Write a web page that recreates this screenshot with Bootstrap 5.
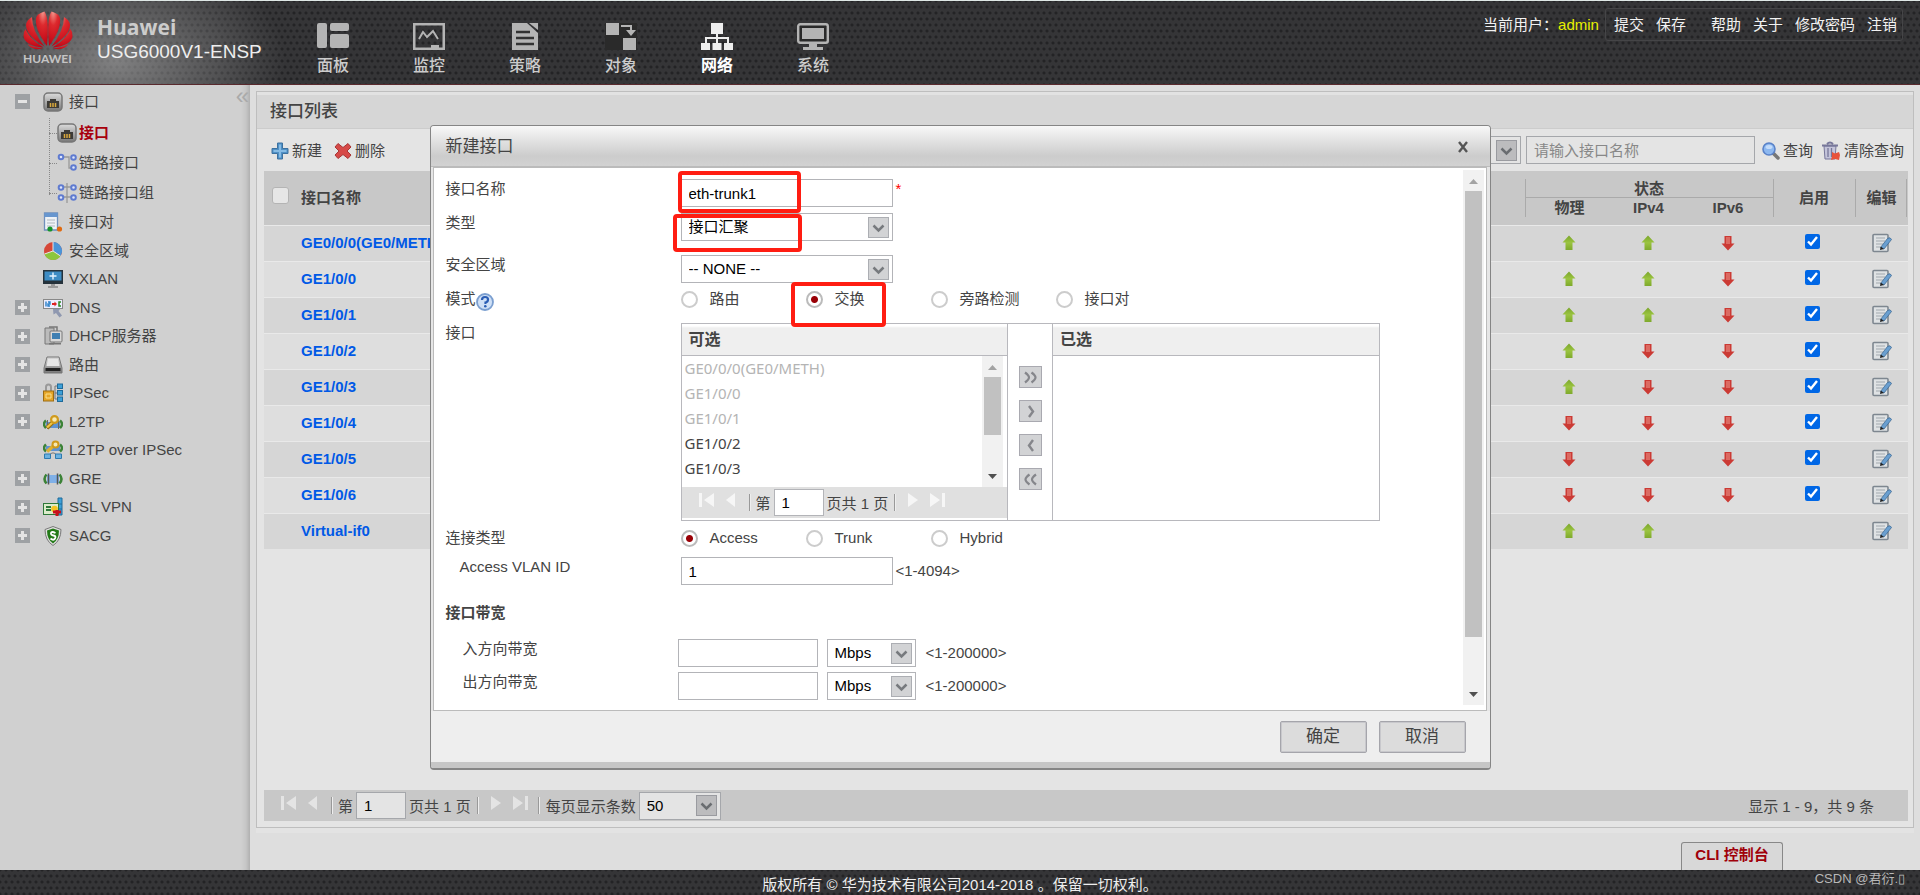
<!DOCTYPE html>
<html lang="zh-CN">
<head>
<meta charset="utf-8">
<meta name="viewport" content="width=device-width, initial-scale=1">
<title>USG6000V1-ENSP</title>
<link href="https://cdn.jsdelivr.net/npm/bootstrap@5.3.0/dist/css/bootstrap.min.css" rel="stylesheet">
<style>
body{font-family:"Liberation Sans","Noto Sans CJK SC",sans-serif;font-size:15px;line-height:20px;color:#444;background:#dedede}
a{color:inherit;text-decoration:none}
svg{display:block;flex:none}
button{color:inherit}
.i18{width:18px;height:18px}
.i20{width:20px;height:20px}
.mesh{background-color:#353537;background-image:radial-gradient(circle,#232325 0 1px,transparent 2px),radial-gradient(circle,#232325 0 1px,transparent 2px);background-size:6px 12px;background-position:0 0,3px 6px}
/* top bar */
.topbar{height:85px;border-top:1px solid #dfe8e6;border-bottom:1px solid #5a2a2e;position:relative}
.topbar::before{content:"";position:absolute;inset:0;background:radial-gradient(ellipse 170px 110px at 115px 60px,rgba(190,190,190,.55),transparent)}
.topbar>*{position:relative}
.logo{width:50px;margin-left:23px;padding-top:10px}
.logo-text{font:700 12px/14px Lato,"Liberation Sans",sans-serif;color:#c4c4c4;margin-top:2px}
.product{margin-left:24px;padding-top:14px;width:188px;white-space:nowrap}
.vendor{font:700 21px/24px "Open Sans","Noto Sans",sans-serif;color:#ccc}
.model{font-size:19px;line-height:26px;color:#eee}
.mainnav .nav-link{width:96px;padding:22px 0 0;color:#ccc;font-size:16px;line-height:22px;font-weight:500;display:flex;flex-direction:column;align-items:center}
.mainnav .nav-link svg{width:32px;height:28px;fill:#b4b4b4;margin-bottom:4px}
.mainnav .active{color:#fff;font-weight:700}
.mainnav .active svg{fill:#eee}
.user{color:#f2f2f2;margin:7px 17px 0 0;height:33px;white-space:nowrap}
.who{color:#e8f000;margin-right:6px}
.userbox{border:1px solid #454547;border-radius:3px;padding:0 5px 0 8px;height:33px;gap:12px}
.userbox .gapped{margin-left:13px}
/* side tree */
.side{width:250px;background:linear-gradient(90deg,#d0d0d0 0 241px,#c6c6c6 246px,#b0b0b0);position:relative}
.side ul{list-style:none;margin:0;padding:0}
.side .trunk{height:33px}
.side .twig{height:28px}
.side .twig:nth-child(odd){height:29px}
.side .node{display:flex;align-items:center;padding-left:15px}
.side .node>a{display:flex;align-items:center;gap:6px;margin-left:13px;white-space:nowrap}
.side .node.bare>a{margin-left:28px}
.tog{width:15px;height:15px;background:#9ea1a4;border:0;padding:0;position:relative;flex:none}
.tog::before,.tog.plus::after{content:"";position:absolute;left:3px;top:6px;width:9px;height:3px;background:#e4e4e4}
.tog.plus::after{transform:rotate(90deg)}
.branch{margin-left:49px!important;position:relative}
.branch::before{content:"";position:absolute;left:0;top:0;height:77px;border-left:1px dotted #888}
.branch li{height:30px;display:flex;align-items:center}
.branch li::before{content:"";width:8px;border-top:1px dotted #888}
.branch a{display:flex;align-items:center;gap:2px}
.branch .on{color:#a8000c;font-weight:700}
.fold{position:absolute;right:1px;top:1px;color:#aaa;border:0;background:none;padding:0;font-size:24px;line-height:20px}
/* list panel */
.listpanel{margin:6px 6px 0;border:1px solid #bebebe;background:#e4e4e4;box-shadow:0 5px 0 #e3e3e3;min-width:0}
.ptitle{font-size:17px;line-height:34px;height:37px;padding:3px 13px 0;margin:0;background:linear-gradient(#e2e2e2 3px,#d6d6d6 3px);border-bottom:1px solid #ccc}
.tools{height:42px;padding:0 9px 0 14px}
.tbtn{border:0;background:none;padding:2px 0 0;display:flex;align-items:center;gap:3px}
.box{height:28px;border:1px solid #b3b4b8;background:#fff;color:#000;padding:0 7px;border-radius:0;line-height:20px}
select.box{appearance:none;background:#fff url("data:image/svg+xml,%3Csvg xmlns='http://www.w3.org/2000/svg' width='21' height='21'%3E%3Crect x='.5' y='.5' width='20' height='20' fill='%23d2d3d5' stroke='%23acaeb3'/%3E%3Cpath d='M5.500 8.500l5 5 5-5' fill='none' stroke='%23777a7e' stroke-width='2.500'/%3E%3C/svg%3E") no-repeat right 3px center}
.dim .box{background-color:#e4e4e4;border-color:#a5a7ab;background-blend-mode:multiply}
.box::placeholder{color:#888}
.scope{width:200px}
.find{width:229px;margin:0 7px 0 5px}
.lists{padding:0 5px 6px 7px}
.grid{width:100%;margin:0;table-layout:fixed}
.grid th{background-color:#c8c8c8;background-repeat:no-repeat;height:27px;padding:0;text-align:center;line-height:18px}
.grid td{padding:0;height:36px;border-top:1px solid #e9e9e9;background:#dedede}
.grid tr:nth-child(odd) td{background:#d6d6d6}
.grid td svg{margin:auto}
.grid .nm{text-align:left;padding-left:1px;white-space:nowrap}
.grid .nm a{color:#0059e6;font-weight:700}
.sp{background-image:linear-gradient(#aaa,#aaa),linear-gradient(#aaa,#aaa);background-position:left center,left center;background-size:1px calc(100% - 16px)}
.sp.last{background-position:left center,right 1px center}
.st1{background-image:linear-gradient(#aaa,#aaa),linear-gradient(#aaa,#aaa);background-position:left bottom;background-size:1px 19px,100% 1px;vertical-align:bottom}
.st2{vertical-align:top;padding-top:1px!important}
.st2.lf{background-image:linear-gradient(#aaa,#aaa);background-size:1px 19px}
.allbox{appearance:none;width:17px;height:17px;background:#e6e6e6;border:1px solid #b4b4b4;border-radius:3px;vertical-align:middle;margin:0 4px 4px 0}
.ena{width:15px;height:15px;accent-color:#0067e6;margin:0 4px 5px 0;vertical-align:middle}
/* paging bar */
.pager{height:31px;padding-left:17px;background:#c8c8c8;white-space:nowrap}
.pager button{border:0;background:none;padding:0;margin-bottom:6px}
.pager svg{height:16px;fill:#e4e4e4}
.pager .box{width:50px;height:27px}
.pager select.box{width:82px;height:28px}
.bar{width:2px;height:17px;border-left:1px solid #999;border-right:1px solid #eee}
.gap12{margin-left:12px}
.b1{margin-left:13px}
.t1{margin:3px 3px 0 5px}
.t2{margin:3px 6px 0 3px}
.b3{margin-left:10px}
.t3{margin:3px 3px 0 6px}
.sum{padding-right:34px;margin-top:3px}
.climb{height:42px}
.cli{border:1px solid #888;border-bottom:0;border-radius:3px 3px 0 0;background:#d8d8d8;color:#a0000a;font-weight:700;width:102px;height:28px;margin-right:137px;padding:0 0 4px}
.foot{height:25px;color:#eee;position:relative;text-align:center;line-height:30px;overflow:hidden}
.credit{position:absolute;right:15px;top:0;font-size:13px;line-height:17px;color:#b8b8b8}
/* dialog */
.dlg{max-width:1061px;min-width:1061px}
.dlg .modal-content{border:1px solid #858585;border-bottom:2px solid #858585;border-radius:4px;background:#e6e6e6;overflow:hidden;color:#444}
.dtitle{height:41px;padding:1px 21px 0 15px;background:linear-gradient(#f8f8f8,#ccc 75%,#d2d2d2);font-size:17px;border-bottom:1px solid #bbb}
.dbody{margin:0 3px 0 2px;border:1px solid #bbb;background:#fff;height:544px;padding:11px 2px 0 12px}
.frow{display:flex;align-items:flex-start}
.frow>.cap{width:235px;flex:none}
.frow.bw>.cap{width:232px;padding-left:17px}
.h29{height:29px}.h33{height:33px}.h34{height:34px}.h36{height:36px}.h42{height:42px}.h46{height:46px}.h205{height:205px}
.full{width:212px}
.help{margin-top:4px}
.ind{padding-left:14px}
.hint{margin:4px 0 0 3px}
.bw .hint{margin-left:10px}
.rate{width:140px;margin-right:9px}
.unit{width:89px}
.rd{display:flex;align-items:center;width:125px;gap:12px;height:20px}
.rd input{appearance:none;width:17px;height:17px;border:2px solid #ccc;border-radius:50%;background:#fff;margin:0}
.rd input:checked{border-color:#bbb;background:radial-gradient(circle,#990006 0 3px,#fff 4px)}
.hl{position:absolute;border:4px solid #ff1d12;border-radius:4px;z-index:2;pointer-events:none}
.hl1{left:-3px;top:-8px;width:123px;height:42px}
.hl2{left:-8px;top:1px;width:129px;height:38px}
.hl3{left:110px;top:-7px;width:95px;height:45px}
.xfer{width:699px;height:198px;border:1px solid #b8b8bd}
.xcol{width:326px}
.xcol h2{font-size:16px;font-weight:700;line-height:26px;height:32px;margin:0;padding:3px 7px 0;background:linear-gradient(#fff 2px,#efefef 4px);border-bottom:1px solid #b8b8bd}
.xcol ul{list-style:none;margin:0;padding:0 0 0 3px;flex:1;font:15px/25px "Noto Sans",sans-serif}
.xcol .off{color:#b4b4b4}
.xlist{height:131px}
.xfer .pager{background:#e0e0e0}
.xfer .pager svg{fill:#f6f6f6}
.xmid{width:46px;border:solid #b8b8bd;border-width:0 1px;gap:12px;padding-top:42px}
.xmid button{width:23px;height:22px;border:1px solid #a9a9b0;background:#d2d3d5;padding:0;color:#85868b;display:grid;place-items:center}
.xmid svg{width:15px;height:13px}
.sbar{width:21px;background:#f1f1f1;display:flex;flex-direction:column;align-items:center}
.sbar i{width:17px;background:#c1c1c1;margin-bottom:auto}
.sbar svg{width:9px;height:21px}
.mainbar{margin:-9px 0 5px}
.thumb-lg{height:446px}
.thumb-sm{height:58px}
.dfoot{height:51px;gap:12px;padding:0 24px 0 0;background:#eee}
.dfoot button{width:87px;height:32px;border:1px solid #a5a5ab;border-radius:2px;background:#dcdcdc;box-shadow:inset 0 0 0 1px #c8c8cc;font-size:17px;padding:0}
.dedge{height:6px;background:#c6c6c6}
.star{color:#f00;margin-left:3px}
</style>
</head>
<body class="d-flex flex-column min-vh-100">
<svg width="0" height="0" class="position-absolute" aria-hidden="true">
<defs>
<linearGradient id="gg" x2="0" y2="1"><stop stop-color="#7aa52c"/><stop offset=".5" stop-color="#9bc440"/><stop offset="1" stop-color="#7ea92c"/></linearGradient>
<linearGradient id="gs" x2="0" y2="1"><stop stop-color="#dcdcdc"/><stop offset="1" stop-color="#777"/></linearGradient>
<radialGradient id="gp" cx=".58" cy="0" r="1"><stop stop-color="#f49b90"/><stop offset=".4" stop-color="#dd2a2e"/><stop offset="1" stop-color="#c00414"/></radialGradient>
</defs>
<symbol id="up" viewBox="0 0 14 16"><path d="M7 .5l6.500 7h-3V15h-7V7.500h-3z" fill="url(#gg)"/></symbol>
<symbol id="dn" viewBox="0 0 14 16"><path d="M3.500 1h7v7.500h3L7 15.500.5 8.500h3z" fill="#cb3a34"/><path d="M5 2h4v7H5z" fill="#dc6a62"/></symbol>
<symbol id="ed" viewBox="0 0 20 20"><rect x="1" y="1.500" width="15" height="17" rx="1" fill="#dfe2e4" stroke="#7e8790" stroke-width="1.600"/><path d="M4 5h9M4 8h9M4 11h7M4 14h4" stroke="#a2a8ae" stroke-width="1.200"/><path d="M8.500 14.500l7-9q3-2 4 1l-7.500 9.500z" fill="#6a9fd0" stroke="#3f6b94" stroke-width=".8"/><path d="M8 17l.7-3.500 3.300 2.500z" fill="#222"/></symbol>
<symbol id="port" viewBox="0 0 20 20"><rect x="1" y="1" width="18" height="18" rx="4" fill="url(#gs)" stroke="#777" stroke-width="1.500"/><path d="M4 16V9h3V7h6v2h3v7z" fill="#3c3a36"/><path d="M7.500 11v4M10 11v4M12.500 11v4" stroke="#d9a83c" stroke-width="1.500"/></symbol>
<symbol id="link" viewBox="0 0 20 20"><path d="M6 4h6v11h3M6 4h3" fill="none" stroke="#999" stroke-width="1.300"/><g fill="#dfe6fb" stroke="#5f7bd0" stroke-width="2"><circle cx="4" cy="4" r="2.300"/><circle cx="16.500" cy="4.500" r="2.300"/><circle cx="16.500" cy="14.500" r="2.300"/></g></symbol>
<symbol id="grp" viewBox="0 0 20 20"><path d="M10 0v20M5 4h10M5 14h10" fill="none" stroke="#999" stroke-width="1.300"/><g fill="#dfe6fb" stroke="#5f7bd0" stroke-width="2"><circle cx="4" cy="4.500" r="2.300"/><circle cx="16.500" cy="4.500" r="2.300"/><circle cx="4" cy="14.500" r="2.300"/><circle cx="16.500" cy="14.500" r="2.300"/></g></symbol>
<symbol id="pair" viewBox="0 0 20 20"><path d="M1.500 1h13v17h-13z" fill="#eef2f6" stroke="#6f8fbb" stroke-width="1.300"/><path d="M1.500 1h13v4h-13z" fill="#6796cf"/><path d="M4 8h8M4 11h8M4 14h8" stroke="#b0b8c0"/><circle cx="7" cy="17" r="2.600" fill="#16942b"/><circle cx="16.500" cy="17" r="2.600" fill="#e06a10"/></symbol>
<symbol id="pie" viewBox="0 0 20 20"><circle cx="10" cy="10" r="9" fill="#d64738"/><path d="M10 10V1a9 9 0 0 1 7.500 14z" fill="#4b94d8"/><path d="M10 10l7.500 5a9 9 0 0 1-16-2z" fill="#8cc63e"/><path d="M10 1v9l7.500 5M10 10l-8.500 3" fill="none" stroke="#e8e8e8"/></symbol>
<symbol id="mon" viewBox="0 0 20 20"><rect y="1" width="20" height="14" fill="#25323b"/><path d="M1.500 2.500h17v9h-17z" fill="#3d8cc4"/><path d="M10 3.500v7M6.500 7h7" stroke="#e6f4ff" stroke-width="1.400"/><path d="M8 15h4v2h3v2H5v-2h3z" fill="#999"/></symbol>
<symbol id="dns" viewBox="0 0 20 20"><rect x=".5" y="1.500" width="19" height="9" fill="#eef" stroke="#888"/><path d="M3 3.500v5M5 4h2v2H5v2h2" stroke="#2a80c8" fill="none" stroke-width="1.400"/><path d="M9 6h4" stroke="#d22" stroke-width="2"/><path d="M11.500 3.500L14 6l-2.500 2.500z" fill="#d22"/><path d="M18 4h-2v4h2" fill="none" stroke="#2a8a20" stroke-width="1.500"/><path d="M10 11h7l-1.500 2 3.500 4.500-2.500 2-3.500-4.500-2.500 1.500z" fill="#8f98b0"/></symbol>
<symbol id="srv" viewBox="0 0 20 20"><path d="M2 2h9v16H2z" fill="#bbb" stroke="#777"/><path d="M6 1h8v6" fill="none" stroke="#777" stroke-width="1.500"/><rect x="7" y="5" width="12" height="11" rx="1" fill="#d8d8d8" stroke="#777"/><path d="M9 7h8v6H9z" fill="#3f7fb2"/><path d="M6 17h12v1.500H6z" fill="#777"/></symbol>
<symbol id="rt" viewBox="0 0 20 20"><path d="M4 2h12l3 11v5H1v-5z" fill="url(#gs)" stroke="#777"/><path d="M5 4h10l1.500 7h-13z" fill="#e6e6e6"/><path d="M2.500 13h15v3h-15z" fill="#222"/></symbol>
<symbol id="lock" viewBox="0 0 20 20"><path d="M3 9V4q0-2.500 2.500-2.500T8 4v5" fill="none" stroke="#999" stroke-width="2"/><rect x=".5" y="8" width="10" height="10" fill="#e6a628" stroke="#9c6c12"/><path d="M3 11h5v4H3z" fill="none" stroke="#fbe08a"/><g fill="#3da0d8" stroke="#1f6a9a"><rect x="14.500" y="1" width="5" height="4.500"/><rect x="14.500" y="7.500" width="5" height="4.500"/><rect x="14.500" y="14" width="5" height="4.500"/></g><path d="M14 3h-2v13h2M12 10h2" fill="none" stroke="#777"/></symbol>
<symbol id="l2" viewBox="0 0 20 20"><path d="M3 10h14v6H3z" fill="#5f93d2"/><path d="M3 8.500Q-1 12 3 16M17 8.500q4 3.500 0 7.500" fill="none" stroke="#3b8236" stroke-width="2.500"/><path d="M4.500 8v9M15.500 8v9" stroke="#666"/><path d="M4 16l6-6" stroke="#9c7310" stroke-width="4"/><path d="M4 15.500l6-5.500" stroke="#f0c648" stroke-width="2.200"/><circle cx="11.500" cy="7.500" r="3.400" fill="#f6e9b4" stroke="#d09a1c" stroke-width="2.200"/></symbol>
<symbol id="l2o" viewBox="0 0 20 20"><path d="M3 6h14v5H3z" fill="#5f93d2"/><path d="M3 4.500q-4 3.500 0 7M17 4.500q4 3.500 0 7" fill="none" stroke="#3b8236" stroke-width="2.500"/><path d="M4 11.500l7-6" stroke="#e0b030" stroke-width="3.500"/><circle cx="12.500" cy="4.500" r="3" fill="#f6e9b4" stroke="#d09a1c" stroke-width="2"/><path d="M4 16l5-3h2l5 3" stroke="#777" fill="none"/><path d="M1.500 14h6v4.500h-6zM12.500 14h6v4.500h-6z" fill="#6cb2e0" stroke="#2d7ab0"/></symbol>
<symbol id="gre" viewBox="0 0 20 20"><path d="M4 6h12v8H4z" fill="#7fb0e8"/><path d="M3.500 5.500q-4 4.500 0 9M16.500 5.500q4 4.500 0 9" fill="none" stroke="#3b8236" stroke-width="2.500"/><path d="M5.500 4.500v11M14.500 4.500v11" stroke="#555" stroke-width="1.500"/></symbol>
<symbol id="ssl" viewBox="0 0 20 20"><path d="M15 1h4v17h-4z" fill="#3da0d8" stroke="#1f6a9a"/><path d="M15 7h4M15 12h4" stroke="#1f6a9a"/><rect x=".5" y="6.500" width="15" height="11" fill="#dceccb" stroke="#2f7a3a"/><path d="M3 10h5M3 13h5" stroke="#2f7a3a" stroke-width="2"/><circle cx="11.500" cy="12" r="3.300" fill="#f5c420"/><path d="M10 15h8M14 13v6" stroke="#c8101c" stroke-width="3"/></symbol>
<symbol id="shd" viewBox="0 0 20 20"><path d="M10 .5l8 3q0 11-8 16Q2 14.500 2 3.500z" fill="#e0e0e0" stroke="#777"/><path d="M10 2.500l6 2q0 9-6 13-6-4-6-13z" fill="#237a18"/><path d="M12.500 7q-4-2-4.500 0t2.500 2.500 1.500 3-4.500 0" fill="none" stroke="#fff" stroke-width="1.800"/></symbol>
<symbol id="arrU" viewBox="0 0 9 21"><path d="M0 14l4.500-5L9 14z"/></symbol>
<symbol id="arrD" viewBox="0 0 9 21"><path d="M0 8h9l-4.500 5z"/></symbol>
<symbol id="pf" viewBox="0 0 15 16"><path d="M0 1h3v14H0zM15 1v14L5 8z"/></symbol>
<symbol id="pp" viewBox="0 0 10 16"><path d="M9 1v14L0 8z"/></symbol>
<symbol id="pn" viewBox="0 0 10 16"><path d="M0 1l10 7-10 7z"/></symbol>
<symbol id="pl" viewBox="0 0 15 16"><path d="M0 1l10 7-10 7zM12 1h3v14h-3z"/></symbol>
</svg>

<header class="topbar mesh d-flex align-items-start">
  <div class="logo">
    <svg width="50" height="39" viewBox="0 0 50 39" fill="url(#gp)"><g id="wing"><path d="M24 35C16 24 12 15 13 7q1-4.500 8.500-6.500C25 6 25.500 16 24 35z"/><path d="M21.500 35.500C9 28 3 21 3 14q.5-5 6-8 0 14 12.500 29.500z"/><path d="M20.500 36.500C8 35.500 1 31 .5 25q-.3-4 2-7 4 10 18 18.500z"/><path d="M20 37.500q-11 2.500-15.500-4.500 6 3 15.500 4.500z"/></g><use href="#wing" transform="matrix(-1 0 0 1 50 0)"/></svg>
    <div class="logo-text">HUAWEI</div>
  </div>
  <div class="product"><div class="vendor">Huawei</div><div class="model">USG6000V1-ENSP</div></div>
  <nav class="nav mainnav flex-nowrap">
    <a class="nav-link" href="#"><svg viewBox="0 0 32 28"><rect width="10" height="25" rx="2"/><rect x="13" width="19" height="8" rx="2"/><rect x="13" y="11" width="19" height="14" rx="2"/></svg>面板</a>
    <a class="nav-link" href="#"><svg viewBox="0 0 32 28"><path fill-rule="evenodd" d="M0 0h32v27H0zM2.500 2.500v22H18V22h8v2.500h3.500v-22z"/><path d="M6 16l4-7 4 5 6-6 5 8" fill="none" stroke="#b4b4b4" stroke-width="2"/></svg>监控</a>
    <a class="nav-link" href="#"><svg viewBox="0 0 32 28"><path d="M3 0h15l11 10v17H3z"/><path d="M20 0h9v7z"/><path d="M7 9h14M7 15h18M7 21h18" stroke="#333" stroke-width="2.500"/></svg>策略</a>
    <a class="nav-link" href="#"><svg viewBox="0 0 32 28"><path d="M0 0h32v27H0z" fill="#2a2a2a"/><path d="M1 0h13v12H1zM18 15h13v12H18zM16 2h11v5h4l-5 6-5-6h4V4h-9z"/></svg>对象</a>
    <a class="nav-link active" href="#"><svg viewBox="0 0 32 28"><path d="M10 0h12v11H10zM0 20h9v7H0zM11.500 20h9v7h-9zM23 20h9v7h-9z"/><path d="M16 10v10M5 21v-6h22v6" fill="none" stroke="#eee" stroke-width="2"/></svg>网络</a>
    <a class="nav-link" href="#"><svg viewBox="0 0 32 28"><rect x="1.200" y="1.200" width="29.600" height="18.600" rx="2" fill="#2a2a2a" stroke="#b4b4b4" stroke-width="2.400"/><path d="M5 5h22v11H5zM12 20h8v4h6v3H6v-3h6z"/></svg>系统</a>
  </nav>
  <div class="user ms-auto d-flex align-items-center">当前用户：<span class="who">admin</span>
    <div class="userbox d-flex align-items-center"><a href="#">提交</a><a href="#">保存</a><a href="#" class="gapped">帮助</a><a href="#">关于</a><a href="#">修改密码</a><a href="#">注销</a></div>
  </div>
</header>

<div class="d-flex flex-grow-1">
  <aside class="side flex-shrink-0">
    <button class="fold" aria-label="收起">«</button>
    <ul>
      <li><div class="node trunk"><button class="tog" aria-label="折叠"></button><a href="#"><svg class="i20"><use href="#port"/></svg>接口</a></div>
        <ul class="branch">
          <li><a href="#" class="on"><svg class="i20"><use href="#port"/></svg>接口</a></li>
          <li><a href="#"><svg class="i20"><use href="#link"/></svg>链路接口</a></li>
          <li><a href="#"><svg class="i20"><use href="#grp"/></svg>链路接口组</a></li>
        </ul></li>
      <li class="node bare twig"><a href="#"><svg class="i20"><use href="#pair"/></svg>接口对</a></li>
      <li class="node bare twig"><a href="#"><svg class="i20"><use href="#pie"/></svg>安全区域</a></li>
      <li class="node bare twig"><a href="#"><svg class="i20"><use href="#mon"/></svg>VXLAN</a></li>
      <li class="node twig"><button class="tog plus" aria-label="展开"></button><a href="#"><svg class="i20"><use href="#dns"/></svg>DNS</a></li>
      <li class="node twig"><button class="tog plus" aria-label="展开"></button><a href="#"><svg class="i20"><use href="#srv"/></svg>DHCP服务器</a></li>
      <li class="node twig"><button class="tog plus" aria-label="展开"></button><a href="#"><svg class="i20"><use href="#rt"/></svg>路由</a></li>
      <li class="node twig"><button class="tog plus" aria-label="展开"></button><a href="#"><svg class="i20"><use href="#lock"/></svg>IPSec</a></li>
      <li class="node twig"><button class="tog plus" aria-label="展开"></button><a href="#"><svg class="i20"><use href="#l2"/></svg>L2TP</a></li>
      <li class="node bare twig"><a href="#"><svg class="i20"><use href="#l2o"/></svg>L2TP over IPSec</a></li>
      <li class="node twig"><button class="tog plus" aria-label="展开"></button><a href="#"><svg class="i20"><use href="#gre"/></svg>GRE</a></li>
      <li class="node twig"><button class="tog plus" aria-label="展开"></button><a href="#"><svg class="i20"><use href="#ssl"/></svg>SSL VPN</a></li>
      <li class="node twig"><button class="tog plus" aria-label="展开"></button><a href="#"><svg class="i20"><use href="#shd"/></svg>SACG</a></li>
    </ul>
  </aside>

  <main class="flex-grow-1 d-flex flex-column dim">
    <section class="listpanel flex-grow-1 d-flex flex-column">
      <h1 class="ptitle">接口列表</h1>
      <div class="tools d-flex align-items-center">
        <button class="tbtn"><svg class="i18" viewBox="0 0 18 18"><path d="M6.500 1h5v5.500H17v5h-5.500V17h-5v-5.500H1v-5h5.500z" fill="#4f90c6" stroke="#3c719f"/><path d="M9 2.500v13M2.500 9h13" stroke="#86bbe4" stroke-width="2"/></svg>新建</button>
        <button class="tbtn ms-2 ps-1"><svg class="i18" viewBox="0 0 18 18"><path d="M4 1.500l5 4 5-4L17 5l-4 4 4 4-3 3.500-5-4-5 4L1 13l4-4-4-4z" fill="#d64a48" stroke="#a83535"/></svg>删除</button>
        <select class="box scope ms-auto" aria-label="查询条件"><option></option></select>
        <input class="box find" placeholder="请输入接口名称" aria-label="接口名称">
        <button class="tbtn"><svg class="i18" viewBox="0 0 18 18"><path d="M11 11l5 5" stroke="#777" stroke-width="3.500" stroke-linecap="round"/><circle cx="7" cy="7" r="6" fill="#8db8f0" stroke="#5a82c8" stroke-width="1.600"/><ellipse cx="7" cy="5" rx="3.500" ry="2" fill="#c4dcfa"/></svg>查询</button>
        <button class="tbtn ms-2"><svg class="i20" viewBox="0 0 20 20"><path d="M3 5h12l-1 13H4z" fill="#c4c4da" stroke="#77779a"/><path d="M7 7v9M10.500 7v9" stroke="#77779a" stroke-width="1.300"/><path d="M1 4.500h16M6 3q3-3 6 0" fill="none" stroke="#77779a" stroke-width="2"/><path d="M11 11l3 1.500 4-1.500 1 3-1 5-4-1-4 1 1-4z" fill="#e8523a"/></svg>清除查询</button>
      </div>
      <div class="lists flex-grow-1 d-flex flex-column justify-content-between">
        <table class="grid">
          <colgroup><col style="width:36px"><col><col style="width:89px"><col style="width:69px"><col style="width:90px"><col style="width:82px"><col style="width:53px"></colgroup>
          <thead>
            <tr><th rowspan="2"><input type="checkbox" class="allbox" aria-label="全选"></th><th rowspan="2" class="nm">接口名称</th><th colspan="3" class="st1">状态</th><th rowspan="2" class="sp">启用</th><th rowspan="2" class="sp last">编辑</th></tr>
            <tr><th class="st2 lf">物理</th><th class="st2">IPv4</th><th class="st2">IPv6</th></tr>
          </thead>
          <tbody id="rows"></tbody>
        </table>
        <div class="pager d-flex align-items-center">
          <button aria-label="首页"><svg width="15"><use href="#pf"/></svg></button>
          <button aria-label="上一页" class="gap12"><svg width="10"><use href="#pp"/></svg></button>
          <span class="bar b1"></span><span class="t1">第</span><input class="box" value="1" aria-label="页码"><span class="t2">页共 1 页</span>
          <span class="bar"></span>
          <button aria-label="下一页" class="gap12"><svg width="10"><use href="#pn"/></svg></button>
          <button aria-label="末页" class="gap12"><svg width="15"><use href="#pl"/></svg></button>
          <span class="bar b3"></span><label for="psize" class="t3">每页显示条数</label>
          <select id="psize" class="box"><option>50</option></select>
          <span class="ms-auto sum">显示 1 - 9，共 9 条</span>
        </div>
      </div>
    </section>
    <div class="d-flex justify-content-end align-items-end climb"><button class="cli">CLI 控制台</button></div>
  </main>
</div>
<footer class="foot mesh">版权所有 © 华为技术有限公司2014-2018 。保留一切权利。<span class="credit">CSDN @君衍.▯</span></footer>

<div class="modal d-block overflow-hidden" role="dialog" aria-label="新建接口">
  <div class="modal-dialog modal-dialog-centered dlg my-0 min-vh-100">
    <div class="modal-content">
      <div class="dtitle d-flex align-items-center justify-content-between">新建接口
        <button class="border-0 bg-transparent p-0" aria-label="关闭"><svg width="12" height="12" viewBox="0 0 12 12"><path d="M2 1l8 10M10 1L2 11" stroke="#555" stroke-width="2.400"/></svg></button></div>
      <div class="dbody d-flex">
        <form class="flex-grow-1">
          <div class="frow h34"><label class="cap" for="nm">接口名称</label><div class="position-relative d-flex"><input id="nm" class="box full" value="eth-trunk1"><span class="star">*</span><span class="hl hl1"></span></div></div>
          <div class="frow h42"><label class="cap" for="tp">类型</label><div class="position-relative"><select id="tp" class="box full"><option>接口汇聚</option></select><span class="hl hl2"></span></div></div>
          <div class="frow h34"><label class="cap" for="zn">安全区域</label><select id="zn" class="box full"><option>-- NONE --</option></select></div>
          <div class="frow h34"><div class="cap d-flex">模式<svg class="i18 help" viewBox="0 0 18 18"><circle cx="9" cy="9" r="8" fill="#cfe0f6" stroke="#7b9fd0" stroke-width="1.800"/><path d="M6 7q0-3 3-3t3 2.500-2.500 3v1.500" fill="none" stroke="#2a5db4" stroke-width="2.200"/><circle cx="9.300" cy="13.300" r="1.300" fill="#2a5db4"/></svg></div>
            <div class="position-relative d-flex"><label class="rd"><input type="radio" name="mode">路由</label><label class="rd"><input type="radio" name="mode" checked>交换</label><label class="rd"><input type="radio" name="mode">旁路检测</label><label class="rd"><input type="radio" name="mode">接口对</label><span class="hl hl3"></span></div></div>
          <div class="frow h205"><div class="cap">接口</div>
            <div class="xfer d-flex">
              <div class="xcol"><h2>可选</h2>
                <div class="xlist d-flex"><ul><li class="off">GE0/0/0(GE0/METH)</li><li class="off">GE1/0/0</li><li class="off">GE1/0/1</li><li>GE1/0/2</li><li>GE1/0/3</li></ul>
                  <div class="sbar me-1"><svg fill="#a3a3a3"><use href="#arrU"/></svg><i class="thumb-sm"></i><svg fill="#505050"><use href="#arrD"/></svg></div></div>
                <div class="pager d-flex align-items-center">
                  <button type="button" aria-label="首页"><svg width="15"><use href="#pf"/></svg></button>
                  <button type="button" aria-label="上一页" class="gap12"><svg width="10"><use href="#pp"/></svg></button>
                  <span class="bar b1"></span><span class="t1">第</span><input class="box" value="1" aria-label="页码"><span class="t2">页共 1 页</span>
                  <span class="bar"></span>
                  <button type="button" aria-label="下一页" class="gap12"><svg width="10"><use href="#pn"/></svg></button>
                  <button type="button" aria-label="末页" class="gap12"><svg width="15"><use href="#pl"/></svg></button>
                </div></div>
              <div class="xmid d-flex flex-column align-items-center">
                <button type="button" aria-label="全部添加"><svg viewBox="0 0 15 13" fill="none" stroke="currentColor" stroke-width="2.200"><path d="M2 1.500q4 3 4 5t-4 5M8.500 1.500q4 3 4 5t-4 5"/></svg></button>
                <button type="button" aria-label="添加"><svg viewBox="0 0 15 13" fill="none" stroke="currentColor" stroke-width="2.400"><path d="M6 1l4 5.500L6 12"/></svg></button>
                <button type="button" aria-label="移除"><svg viewBox="0 0 15 13" fill="none" stroke="currentColor" stroke-width="2.400"><path d="M10 1L6 6.500 10 12"/></svg></button>
                <button type="button" aria-label="全部移除"><svg viewBox="0 0 15 13" fill="none" stroke="currentColor" stroke-width="2.200"><path d="M6.500 1.500q-4 3-4 5t4 5M13 1.500q-4 3-4 5t4 5"/></svg></button>
              </div>
              <div class="xcol flex-fill"><h2>已选</h2></div>
            </div></div>
          <div class="frow h29"><div class="cap">连接类型</div><label class="rd"><input type="radio" name="lt" checked>Access</label><label class="rd"><input type="radio" name="lt">Trunk</label><label class="rd"><input type="radio" name="lt">Hybrid</label></div>
          <div class="frow h46"><label class="cap ind" for="vl">Access VLAN ID</label><input id="vl" class="box full" value="1"><span class="hint">&lt;1-4094&gt;</span></div>
          <div class="frow h36"><b>接口带宽</b></div>
          <div class="frow bw h33"><label class="cap" for="bi">入方向带宽</label><input id="bi" class="box rate"><select class="box unit" aria-label="单位"><option>Mbps</option></select><span class="hint">&lt;1-200000&gt;</span></div>
          <div class="frow bw h33"><label class="cap" for="bo">出方向带宽</label><input id="bo" class="box rate"><select class="box unit" aria-label="单位"><option>Mbps</option></select><span class="hint">&lt;1-200000&gt;</span></div>
        </form>
        <div class="sbar mainbar"><svg fill="#a3a3a3"><use href="#arrU"/></svg><i class="thumb-lg"></i><svg fill="#505050"><use href="#arrD"/></svg></div>
      </div>
      <div class="dfoot d-flex align-items-center justify-content-end"><button>确定</button><button>取消</button></div>
      <div class="dedge"></div>
    </div>
  </div>
</div>
<script src="https://cdn.jsdelivr.net/npm/bootstrap@5.3.0/dist/js/bootstrap.bundle.min.js"></script>
<script>
// name, link state of physical / IPv4 / IPv6, whether it can be enabled
const ports = [
  ['GE0/0/0(GE0/METH)', 'up', 'up', 'dn', 1], ['GE1/0/0', 'up', 'up', 'dn', 1], ['GE1/0/1', 'up', 'up', 'dn', 1],
  ['GE1/0/2', 'up', 'dn', 'dn', 1], ['GE1/0/3', 'up', 'dn', 'dn', 1], ['GE1/0/4', 'dn', 'dn', 'dn', 1],
  ['GE1/0/5', 'dn', 'dn', 'dn', 1], ['GE1/0/6', 'dn', 'dn', 'dn', 1], ['Virtual-if0', 'up', 'up', '', 0]];
const icon = (id, w, h) => id ? `<svg width="${w}" height="${h}"><use href="#${id}"/></svg>` : '';
document.getElementById('rows').innerHTML = ports.map(([n, a, b, c, e]) =>
  `<tr><td></td><td class="nm"><a href="#">${n}</a></td><td>${icon(a,14,16)}</td><td>${icon(b,14,16)}</td><td>${icon(c,14,16)}</td>` +
  `<td class="text-center">${e ? `<input type="checkbox" class="ena" checked aria-label="启用 ${n}">` : ''}</td>` +
  `<td><a href="#" aria-label="编辑 ${n}">${icon('ed',20,20)}</a></td></tr>`).join('');
</script>
</body>
</html>
